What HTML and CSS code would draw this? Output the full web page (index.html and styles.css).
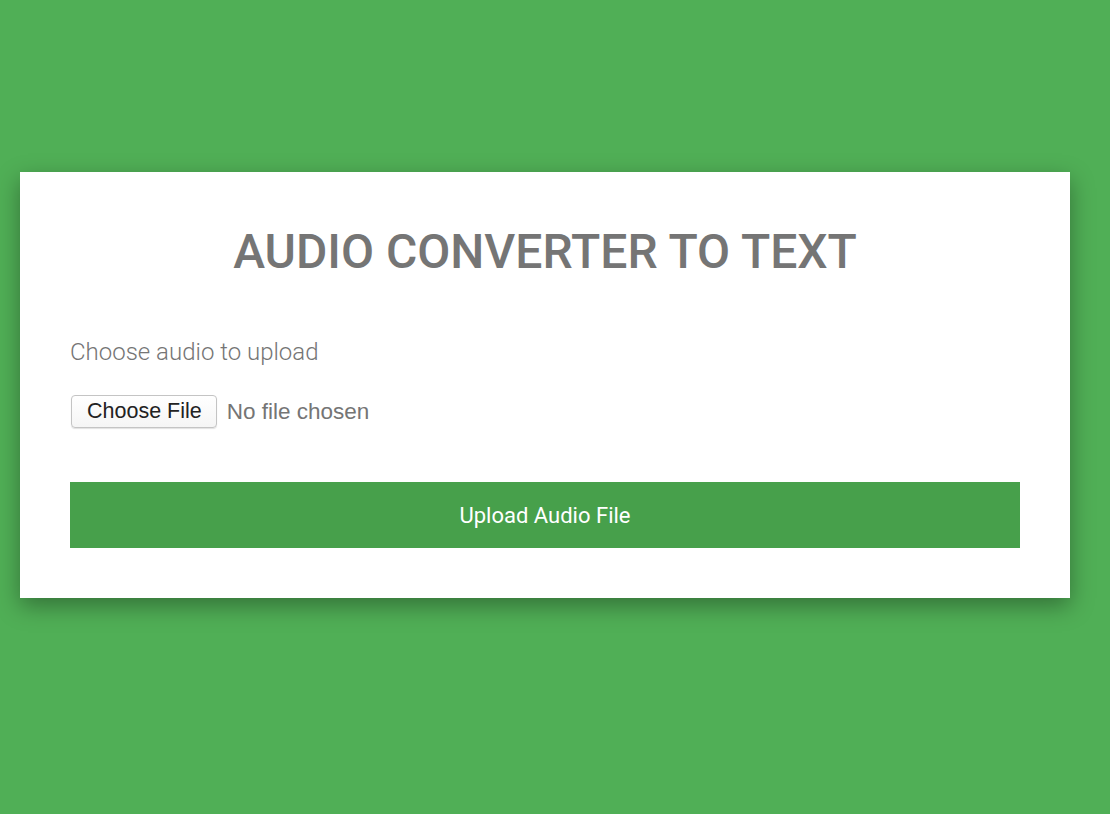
FILE: index.html
```html
<!DOCTYPE html>
<html lang="en">
<head>
<meta charset="utf-8">
<title>Audio Converter to Text</title>
<link rel="stylesheet" href="styles.css">
</head>
<body>
<main class="card">
  <h1 class="title">AUDIO CONVERTER TO TEXT</h1>
  <form class="form">
    <label class="label">Choose audio to upload</label>
    <div class="file-row">
      <span class="file-btn">Choose File</span>
      <span class="file-name">No file chosen</span>
    </div>
    <button type="button" class="upload">Upload Audio File</button>
  </form>
</main>
</body>
</html>
```

FILE: styles.css
```css
html, body {
  margin: 0;
  padding: 0;
}
body {
  background: #50af56;
  min-height: 814px;
  padding: 172px 0 0 20px;
  box-sizing: border-box;
  font-family: Roboto, "Noto Sans", sans-serif;
}
.card {
  width: 1050px;
  box-sizing: border-box;
  background: #fff;
  padding: 50px 50px 50px;
  box-shadow: 0 8px 22px rgba(0, 0, 0, 0.35);
}
.title {
  margin: 0;
  font-size: 48px;
  line-height: 60px;
  font-weight: 500;
  color: #757575;
  text-align: center;
}
.form {
  display: flex;
  flex-direction: column;
  margin-top: 54px;
}
.label {
  font-size: 24px;
  line-height: 32px;
  font-weight: 300;
  color: #757575;
}
.file-row {
  display: flex;
  align-items: center;
  gap: 10px;
  margin-top: 27px;
}
.file-btn {
  margin-left: 1px;
  display: inline-flex;
  align-items: center;
  height: 33px;
  box-sizing: border-box;
  padding: 0 14px 0 15px;
  border: 1px solid #c4c4c4;
  border-radius: 4px;
  background: linear-gradient(#ffffff, #f5f5f5);
  box-shadow: 0 1px 1px rgba(0, 0, 0, 0.12);
  font-family: "Liberation Sans", Arial, sans-serif;
  font-size: 21.5px;
  color: #222;
}
.file-name {
  font-family: "Liberation Sans", Arial, sans-serif;
  font-size: 22.5px;
  color: #757575;
}
.upload {
  margin-top: 54px;
  height: 66px;
  border: none;
  background: #47a04b;
  color: #fff;
  font-family: Roboto, "Noto Sans", sans-serif;
  font-size: 22px;
  font-weight: 400;
  cursor: pointer;
}
```
